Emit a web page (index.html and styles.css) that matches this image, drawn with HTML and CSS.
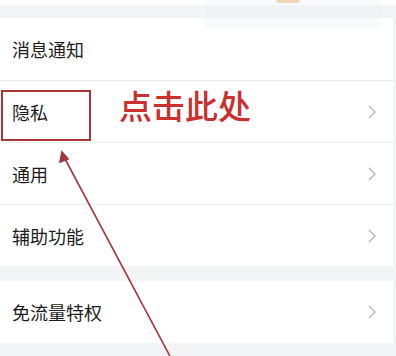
FILE: index.html
```html
<!DOCTYPE html>
<html>
  <head>
    <meta charset="utf-8" />
    <title>设置</title>
    <link rel="stylesheet" href="styles.css">
  </head>
  <body>
    <div class="page">
      <div class="top-strip"></div>

      <div class="card">
        <div class="row"><span class="label">消息通知</span></div>
        <div class="row">
          <span class="label">隐私</span>
          <svg class="chevron" viewBox="0 0 8 14"><polyline points="1,1 7,7 1,13" /></svg>
        </div>
        <div class="row">
          <span class="label">通用</span>
          <svg class="chevron" viewBox="0 0 8 14"><polyline points="1,1 7,7 1,13" /></svg>
        </div>
        <div class="row">
          <span class="label">辅助功能</span>
          <svg class="chevron" viewBox="0 0 8 14"><polyline points="1,1 7,7 1,13" /></svg>
        </div>
      </div>

      <div class="card card-second">
        <div class="row">
          <span class="label">免流量特权</span>
          <svg class="chevron" viewBox="0 0 8 14"><polyline points="1,1 7,7 1,13" /></svg>
        </div>
      </div>

      <!-- annotation layer -->
      <div class="ghost"></div>
      <div class="ghost-tab"></div>
      <div class="mark-box"></div>
      <div class="mark-text">点击此处</div>
      <svg class="mark-arrow" viewBox="0 0 396 356">
        <line x1="64" y1="157" x2="172" y2="360" />
        <polygon points="62,152 60,162 68,159" />
      </svg>
    </div>
  </body>
</html>
```

FILE: styles.css
```css
body {
  margin: 0;
  padding: 0;
  background-color: #f3f4f6;
  font-family: "Noto Sans CJK SC", "Noto Sans", sans-serif;
}

.page {
  position: relative;
  width: 396px;
  height: 356px;
  overflow: hidden;
}

.top-strip {
  height: 5px;
  background-color: #fff;
  margin-bottom: 13px;
}

/* List cards */
.card {
  background-color: #fff;
  margin-right: 3px;
}

.card-second {
  margin-top: 15px;
}

.row {
  display: flex;
  align-items: center;
  justify-content: space-between;
  height: 62px;
  padding: 0 17px 0 12px;
  border-top: 1px solid #ededed;
  box-sizing: border-box;
}

.card .row:first-child {
  border-top: none;
}

.label {
  font-size: 18px;
  color: #1c1c1c;
}

.chevron {
  width: 8px;
  height: 14px;
  fill: none;
  stroke: #b5b5b5;
  stroke-width: 1.4;
}

/* Faint overlay at the top right */
.ghost {
  position: absolute;
  left: 205px;
  top: 0;
  width: 176px;
  height: 28px;
  background-color: rgba(236, 238, 243, 0.3);
}

.ghost-tab {
  position: absolute;
  left: 276px;
  top: 0;
  width: 24px;
  height: 3px;
  background-color: #efd9b5;
  border-radius: 0 0 4px 4px;
}

/* Red annotation */
.mark-box {
  position: absolute;
  left: 1px;
  top: 90px;
  width: 86px;
  height: 47px;
  border: 2px solid #a8353a;
}

.mark-text {
  position: absolute;
  left: 119px;
  top: 84px;
  font-size: 33px;
  line-height: 42px;
  font-weight: 500;
  color: #c9302f;
}

.mark-arrow {
  position: absolute;
  left: 0;
  top: 0;
  width: 396px;
  height: 356px;
  stroke: #a3363d;
  stroke-width: 1.6;
  fill: #a3363d;
}
```
